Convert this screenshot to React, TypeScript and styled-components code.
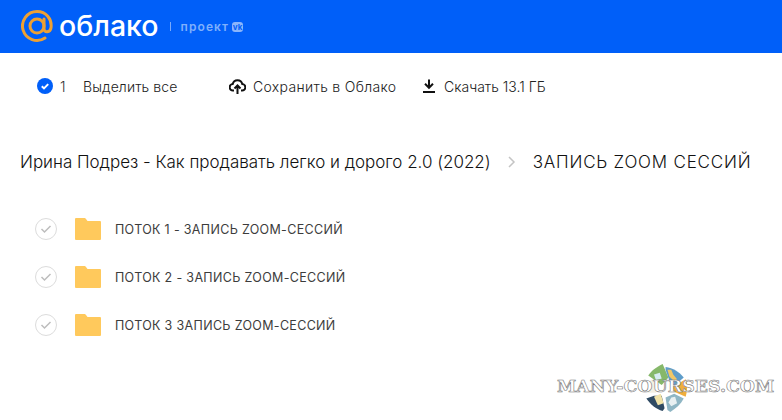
import styled, { createGlobalStyle } from 'styled-components';

const items = ['ПОТОК 1 - ЗАПИСЬ ZOOM-СЕССИЙ', 'ПОТОК 2 - ЗАПИСЬ ZOOM-СЕССИЙ', 'ПОТОК 3 ЗАПИСЬ ZOOM-СЕССИЙ'];

function App() {
  return (
    <Page>
      <GlobalStyle />
      <Header>
        <svg width="32" height="33" viewBox="0 0 32 33" fill="none">
          <circle cx="16" cy="16" r="7" stroke="#eea033" strokeWidth="3" />
          <path
            d="M23 9v9.500c0 4.700 6.300 4.400 7-.7C31.200 8.500 24.800 1.500 16 1.500a14.500 14.500 0 1 0 8 26.600"
            stroke="#eea033"
            strokeWidth="3"
            strokeLinecap="round"
          />
        </svg>
        <LogoText>облако</LogoText>
        <LogoDivider />
        <ProjectText>проект</ProjectText>
        <VkBadge>vk</VkBadge>
      </Header>

      <Toolbar>
        <Selection>
          <svg width="16" height="16" viewBox="0 0 16 16">
            <circle cx="8" cy="8" r="8" fill="#005ff9" />
            <path d="M4.800 8.200l2.200 2.200 4.200-4.300" fill="none" stroke="#fff" strokeWidth="2" />
          </svg>
          <Count>1</Count>
          <ActionText $spacing={0.08}>Выделить все</ActionText>
        </Selection>
        <Action $width={168}>
          <svg width="17" height="18" viewBox="0 0 17 18" fill="none" stroke="#111" strokeWidth="2">
            <path d="M5 13.500H4a3 3 0 0 1-.3-6.400 4.900 4.900 0 0 1 9.600 0 3 3 0 0 1-.3 6.400h-1" />
            <path d="M8.500 17V9M5.500 11.500l3-3 3 3" />
          </svg>
          <ActionText $spacing={0.32}>Сохранить в Облако</ActionText>
        </Action>
        <Action $width={140}>
          <svg width="16" height="18" viewBox="0 0 16 18" fill="none" stroke="#111">
            <path d="M8 2.500v8M4 6.800l4 4 4-4" strokeWidth="2" />
            <path d="M2 15h12" strokeWidth="2" />
          </svg>
          <ActionText $spacing={0}>Скачать 13.1 ГБ</ActionText>
        </Action>
      </Toolbar>

      <Breadcrumbs>
        <Crumb $spacing={-0.02}>Ирина Подрез - Как продавать легко и дорого 2.0 (2022)</Crumb>
        <svg width="10" height="14" viewBox="0 0 10 14" fill="none" stroke="#c4c4c4" strokeWidth="1.500">
          <path d="M2 2l5 5-5 5" />
        </svg>
        <Crumb $spacing={0.8}>ЗАПИСЬ ZOOM СЕССИЙ</Crumb>
      </Breadcrumbs>

      <List>
        {items.map((name) => (
          <Row key={name}>
            <RowCheck>
              <svg width="12" height="10" viewBox="0 0 12 10" fill="none" stroke="#bdbdbd" strokeWidth="1.500">
                <path d="M1.500 5l3 3 6-6" />
              </svg>
            </RowCheck>
            <svg width="26" height="22" viewBox="0 0 26 22">
              <path
                d="M0 1a1 1 0 0 1 1-1h8c1 0 1.500.300 2 1l1.500 2H25a1 1 0 0 1 1 1v17a1 1 0 0 1-1 1H1a1 1 0 0 1-1-1z"
                fill="#ffc95c"
              />
            </svg>
            <RowName>{name}</RowName>
          </Row>
        ))}
      </List>

      <Watermark>
        <Globe width="43" height="48" viewBox="0 0 44 50" fill="none">
          <path d="M3 12C7 6 12 3 18 0l6 14-7 8z" fill="#86b86a" />
          <path d="M21 3c8 1 14 5 19 11l-9 8-4 1-6-17z" fill="#5f9dc9" />
          <path d="M28 24l14-8c2 5 2 11 0 18l-12-5z" fill="#f0ae3c" />
          <path d="M30 31l10 5c-3 6-8 10-14 14l-3-2-2-13z" fill="#8fb6c4" />
          <path d="M24 40l3-5 4-1 2 7-6 3z" fill="#e8f0f2" />
          <path d="M17 33l3 13-2 3C11 47 5 42 1 36l8-3z" fill="#2f4a63" />
          <path d="M9 34l7-3 3 10-6 2z" fill="#f1e3a8" />
          <path d="M6 16c-3 4-4 9-4 14h9l3-9z" fill="#f3f0e4" />
          <path d="M23 6l4 0 2 5 4 5-3 2-5-5z" fill="#f1c766" />
          <path d="M9 11l6-2 2 6-6 2z" fill="#d7ecf2" />
        </Globe>
        <WatermarkText>MANY-COURSES.COM</WatermarkText>
      </Watermark>
    </Page>
  );
}

export default App;

const GlobalStyle = createGlobalStyle`
  html, body {
    margin: 0;
    background: #fff;
  }
  svg {
    display: block;
    flex-shrink: 0;
  }
`;

const Page = styled.div`
  position: relative;
  width: 782px;
  height: 420px;
  overflow: hidden;
  font-family: Inter, 'Noto Sans', sans-serif;
  color: #333;
`;

const Header = styled.header`
  display: flex;
  align-items: center;
  height: 53px;
  padding-left: 21px;
  background: #005ff9;
`;

const LogoText = styled.span`
  margin-left: 6px;
  font-size: 28.5px;
  font-weight: 500;
  line-height: 1;
  color: #fff;
`;

const LogoDivider = styled.span`
  width: 1px;
  height: 9px;
  margin: 0 10px 0 11px;
  background: #7aaafb;
`;

const ProjectText = styled.span`
  font-size: 12px;
  font-weight: 600;
  letter-spacing: 1.1px;
  color: #7fb0fc;
`;

const VkBadge = styled.span`
  display: flex;
  align-items: center;
  justify-content: center;
  width: 11px;
  height: 10px;
  margin-left: 3px;
  border-radius: 3px;
  background: #8ab5fb;
  font-size: 8px;
  font-weight: 700;
  line-height: 1;
  color: #005ff9;
`;

const Toolbar = styled.div`
  display: flex;
  align-items: center;
  height: 66px;
  padding-left: 37px;
`;

const Selection = styled.div`
  display: flex;
  align-items: center;
  width: 192px;
`;

const Count = styled.span`
  width: 23px;
  margin-left: 7px;
  font-size: 14px;
  font-weight: 300;
  color: #333;
`;

const Action = styled.div<{ $width: number }>`
  display: flex;
  align-items: center;
  gap: 7px;
  width: ${(p) => p.$width}px;
  margin-right: 24px;
`;

const ActionText = styled.span<{ $spacing: number }>`
  font-size: 14px;
  font-weight: 300;
  letter-spacing: ${(p) => p.$spacing}px;
  color: #222;
  white-space: nowrap;
`;

const Breadcrumbs = styled.nav`
  display: flex;
  align-items: center;
  gap: 16px;
  height: 36px;
  margin-top: 25px;
  padding-left: 20px;
`;

const Crumb = styled.span<{ $spacing: number }>`
  font-size: 17px;
  font-weight: 300;
  letter-spacing: ${(p) => p.$spacing}px;
  color: #111;
  white-space: nowrap;
`;

const List = styled.div`
  display: flex;
  flex-direction: column;
  margin-top: 25px;
  padding-left: 35px;
`;

const Row = styled.div`
  display: flex;
  align-items: center;
  height: 48px;
`;

const RowCheck = styled.span`
  display: flex;
  align-items: center;
  justify-content: center;
  width: 22px;
  height: 22px;
  margin-right: 18px;
  border: 1px solid #dcdcdc;
  border-radius: 50%;
  box-sizing: border-box;
`;

const RowName = styled.span`
  margin-left: 14px;
  font-size: 12.5px;
  letter-spacing: 0.33px;
  color: #3c3c3c;
`;

const Watermark = styled.div`
  position: absolute;
  left: 557px;
  top: 364px;
  width: 218px;
  height: 50px;
`;

const Globe = styled.svg`
  position: absolute;
  left: 88px;
  top: 0;
`;

const WatermarkText = styled.span`
  position: absolute;
  left: 0;
  top: 12px;
  font-family: 'DejaVu Serif', serif;
  font-size: 17.4px;
  font-weight: 700;
  color: #fff;
  -webkit-text-stroke: 0.6px #777;
  white-space: nowrap;
`;
